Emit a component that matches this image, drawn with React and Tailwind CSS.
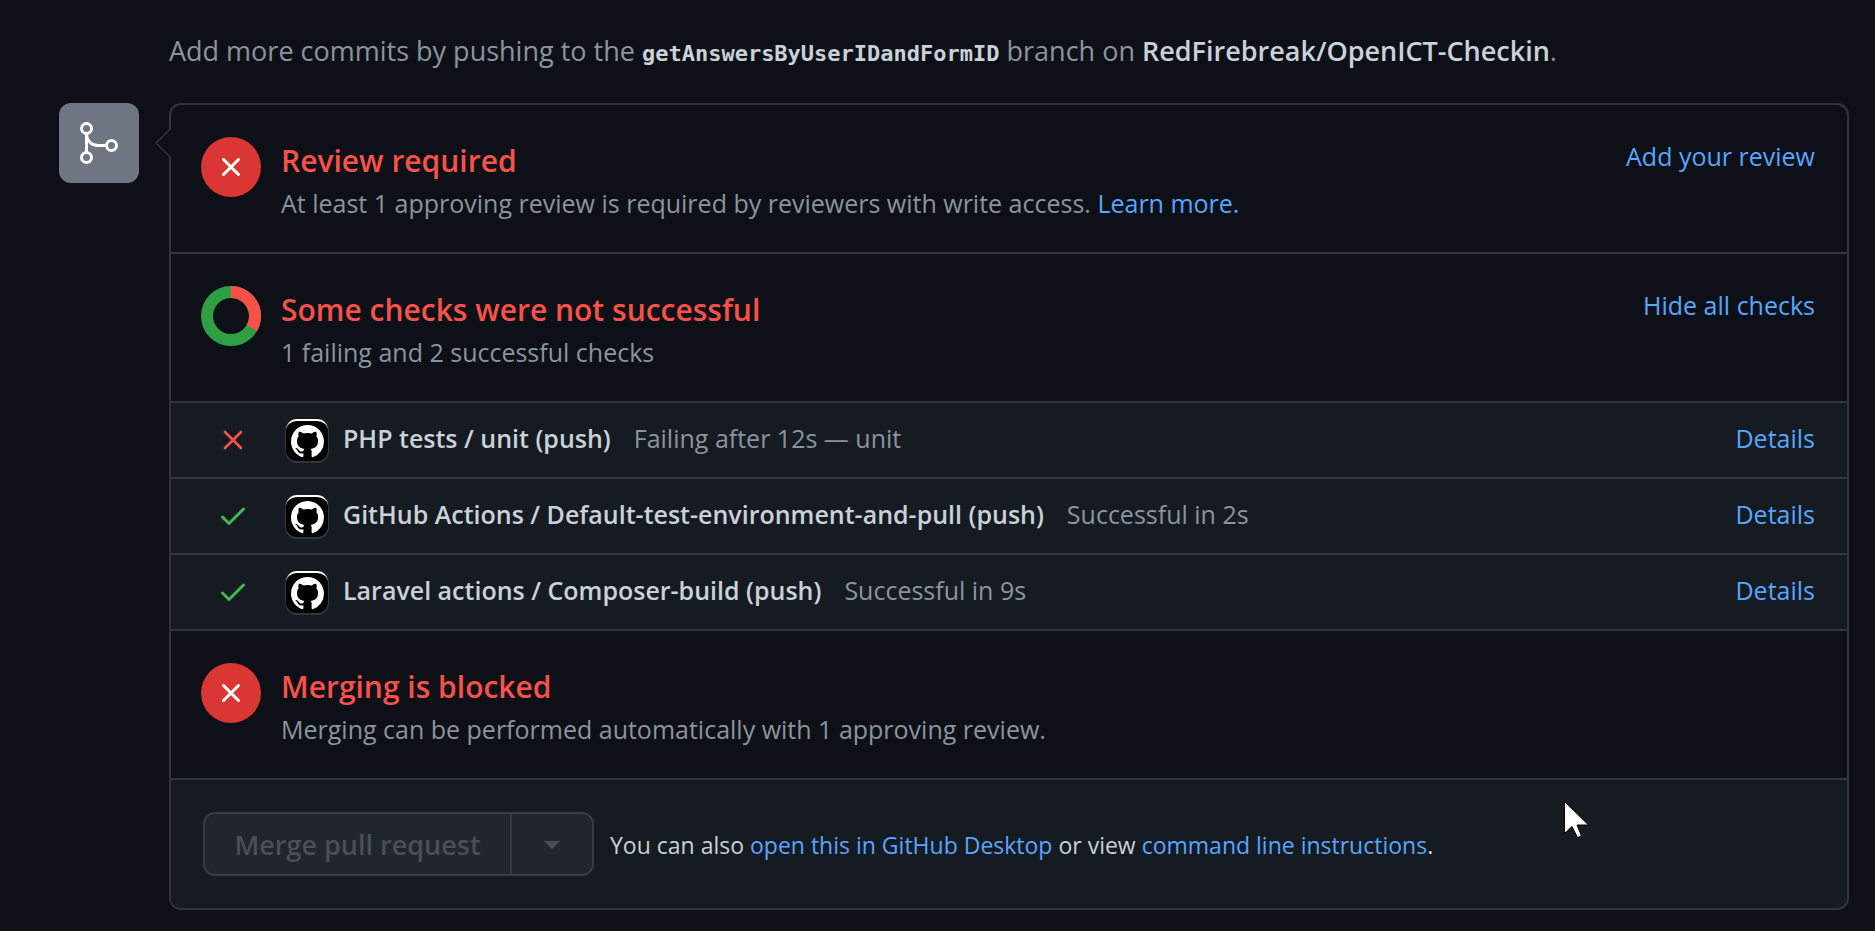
import React from "react";

const checks = [
  { ok: false, name: "PHP tests / unit (push)", status: "Failing after 12s — unit" },
  { ok: true, name: "GitHub Actions / Default-test-environment-and-pull (push)", status: "Successful in 2s" },
  { ok: true, name: "Laravel actions / Composer-build (push)", status: "Successful in 9s" },
];

function Link({ className = "", children }) {
  return (
    <a href="#" className={`text-[#58a6ff] hover:underline ${className}`}>
      {children}
    </a>
  );
}

function MergeIcon() {
  return (
    <svg width="48" height="48" viewBox="0 0 48 48" fill="none" stroke="#fff" strokeWidth="3" aria-hidden="true">
      <circle cx="11.5" cy="9.5" r="5" />
      <circle cx="11.5" cy="38.5" r="5" />
      <circle cx="36.5" cy="26.5" r="5" />
      <path d="M11.5 14.5v19M11.5 15c0 6.5 5 11.5 11.5 11.5h8.5" />
    </svg>
  );
}

function BlockedIcon() {
  return (
    <span className="flex size-[60px] shrink-0 items-center justify-center rounded-full bg-[#da3633]">
      <svg width="20" height="20" viewBox="0 0 20 20" stroke="#fff" strokeWidth="3" strokeLinecap="round" aria-hidden="true">
        <path d="M2.5 2.5l15 15M17.5 2.5l-15 15" />
      </svg>
    </span>
  );
}

function ChecksDonut() {
  return (
    <svg width="60" height="60" viewBox="0 0 60 60" fill="none" strokeWidth="12" className="shrink-0" aria-hidden="true">
      <circle cx="30" cy="30" r="24" stroke="#2ea043" />
      <path d="M30 6A24 24 0 0 1 50.78 42" stroke="#f85149" />
    </svg>
  );
}

function StatusIcon({ ok }) {
  return ok ? (
    <svg width="26" height="20" viewBox="0 0 26 20" fill="none" stroke="#3fb950" strokeWidth="3" strokeLinecap="round" strokeLinejoin="round" aria-hidden="true">
      <path d="M2.5 11l6.5 6.5L23.5 3" />
    </svg>
  ) : (
    <svg width="26" height="20" viewBox="0 0 26 20" fill="none" stroke="#f85149" strokeWidth="2.6" strokeLinecap="round" aria-hidden="true">
      <path d="M5 2l16 16M21 2L5 18" />
    </svg>
  );
}

function GitHubAvatar() {
  return (
    <span className="flex size-[42px] shrink-0 items-center justify-center rounded-[11px] border-t-2 border-white bg-black shadow-[0_1px_0_1px_#30363d]">
      <svg width="33" height="33" viewBox="0 0 16 16" fill="#fff" aria-hidden="true">
        <path d="M8 0C3.58 0 0 3.58 0 8c0 3.54 2.29 6.53 5.47 7.59.4.07.55-.17.55-.38 0-.19-.01-.82-.01-1.49-2.01.37-2.53-.49-2.69-.94-.09-.23-.48-.94-.82-1.13-.28-.15-.68-.52-.01-.53.63-.01 1.08.58 1.23.82.72 1.21 1.87.87 2.33.66.07-.52.28-.87.51-1.07-1.78-.2-3.64-.89-3.64-3.95 0-.87.31-1.59.82-2.15-.08-.2-.36-1.02.08-2.12 0 0 .67-.21 2.2.82.64-.18 1.32-.27 2-.27s1.36.09 2 .27c1.53-1.04 2.2-.82 2.2-.82.44 1.1.16 1.92.08 2.12.51.56.82 1.27.82 2.15 0 3.07-1.87 3.75-3.65 3.95.29.25.54.73.54 1.48 0 1.07-.01 1.93-.01 2.2 0 .21.15.46.55.38A8.013 8.013 0 0 0 16 8c0-4.42-3.58-8-8-8z" />
      </svg>
    </span>
  );
}

function Section({ icon, title, action, children }) {
  return (
    <section className="flex items-start gap-5 border-b-2 border-[#30363d] pt-8 pr-8 pb-[31px] pl-[30px]">
      {icon}
      <div className="min-w-0 flex-1">
        <h2 className="text-[30px] leading-[48px] font-semibold text-[#f85149]">{title}</h2>
        <p className="text-[25px] leading-9 text-[#8b949e]">{children}</p>
      </div>
      {action && <Link className="text-[25px] leading-[38px] whitespace-nowrap">{action}</Link>}
    </section>
  );
}

export default function App() {
  return (
    <main className="min-h-screen bg-[#0d1117] pt-[30px] pr-[26px] pb-[22px] pl-[59px] font-['Open_Sans',sans-serif] text-[#c9d1d9]">
      <p className="mb-[31px] pl-[110px] text-[27px] leading-[42px] text-[#8b949e]">
        Add more commits by pushing to the{" "}
        <strong className="font-['DejaVu_Sans_Mono',monospace] text-[22px] leading-none font-bold text-[#c9d1d9]">getAnswersByUserIDandFormID</strong>{" "}
        branch on <strong className="font-semibold text-[#c9d1d9]">RedFirebreak/OpenICT-Checkin</strong>.
      </p>

      <div className="flex items-start gap-[30px]">
        <span className="flex size-20 shrink-0 items-center justify-center rounded-xl bg-[#6e7681]">
          <MergeIcon />
        </span>

        <div className="relative min-w-0 flex-1 rounded-xl border-2 border-[#30363d]">
          <svg className="absolute top-[23px] -left-4" width="16" height="30" viewBox="0 0 16 30" aria-hidden="true">
            <path d="M16 0.5L1 15l15 14.5z" fill="#0d1117" />
            <path d="M15.5 0.8L1 15l14.5 14.2" fill="none" stroke="#30363d" strokeWidth="1.3" />
          </svg>

          <Section icon={<BlockedIcon />} title="Review required" action="Add your review">
            At least 1 approving review is required by reviewers with write access. <Link>Learn more.</Link>
          </Section>

          <Section icon={<ChecksDonut />} title="Some checks were not successful" action="Hide all checks">
            1 failing and 2 successful checks
          </Section>

          <ul>
            {checks.map((check) => (
              <li key={check.name} className="flex items-start border-b-2 border-[#30363d] bg-[#161b22] py-4 pr-8 pl-[49px] text-[25px] leading-[38px]">
                <span className="flex items-center gap-10">
                  <StatusIcon ok={check.ok} />
                  <GitHubAvatar />
                </span>
                <strong className="ml-[15px] font-semibold">{check.name}</strong>
                <span className="ml-[23px] flex-1 text-[#8b949e]">{check.status}</span>
                <Link>Details</Link>
              </li>
            ))}
          </ul>

          <Section icon={<BlockedIcon />} title="Merging is blocked">
            Merging can be performed automatically with 1 approving review.
          </Section>

          <footer className="flex items-center gap-4 rounded-b-[10px] bg-[#161b22] p-8">
            <div className="flex h-16 shrink-0 rounded-xl border-2 border-[#363b42] bg-[#21262d]">
              <button type="button" disabled className="w-[307px] border-r-2 border-[#363b42] pt-0.5 text-[27px] font-semibold whitespace-nowrap text-[#484f58]">
                Merge pull request
              </button>
              <button type="button" disabled aria-label="Select merge method" className="flex w-20 items-center justify-center pt-0.5">
                <svg width="16" height="8" viewBox="0 0 16 8" fill="#484f58" aria-hidden="true">
                  <path d="M0 0h16L8 8z" />
                </svg>
              </button>
            </div>
            <p className="pt-0.5 text-[23px] leading-9">
              You can also <Link>open this in GitHub Desktop</Link> or view <Link>command line instructions</Link>.
            </p>
          </footer>
        </div>
      </div>

      <svg className="pointer-events-none absolute top-[801px] left-[1564px]" width="26" height="38" viewBox="0 0 26 38" aria-hidden="true">
        <path d="M0.5 0.5v32l7.5-7 5.5 11 4-1.5L13 24h11.5z" fill="#fff" stroke="#000" strokeWidth="1" />
      </svg>
    </main>
  );
}
